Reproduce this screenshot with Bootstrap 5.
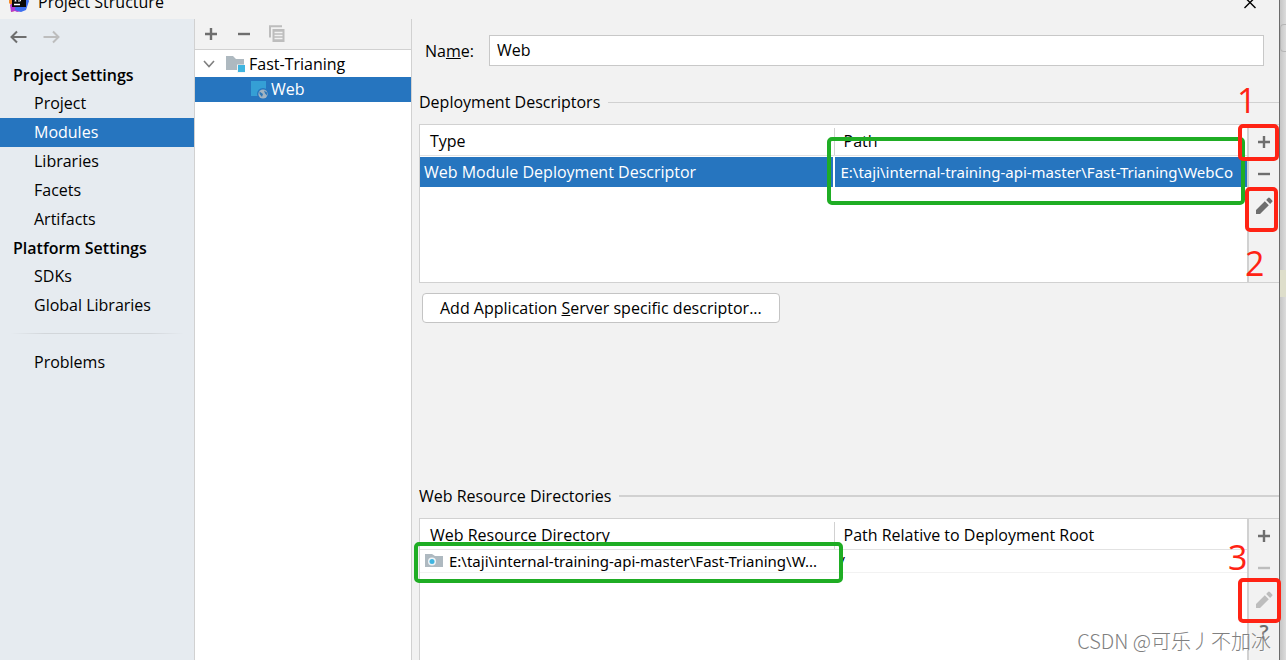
<!DOCTYPE html>
<html lang="en">
<head>
<meta charset="utf-8">
<meta name="viewport" content="width=device-width, initial-scale=1">
<title>Project Structure</title>
<link href="https://cdn.jsdelivr.net/npm/bootstrap@5.3.0/dist/css/bootstrap.min.css" rel="stylesheet">
<style>
  :root { --sel: #2675bf; --line: #d1d1d1; --ink: #6e6e6e; }
  body { font: 16px/20px "Open Sans", "Noto Sans CJK SC", sans-serif; color: #000; background: #f2f2f2; overflow: hidden; }
  svg { display: block; flex: none; }
  .title-strip { height: 19px; }
  .title-strip > * { margin-top: -16px; }
  .title-strip svg.logo { margin-left: 9px; }
  .title-text { padding: 8px 0 0 9px; }
  .close-btn { margin-right: 22px; }
  .app-window { min-width: 0; border-right: 1px solid #6b6b6b; }
  .backdrop { width: 6px; background: linear-gradient(90deg, #c6c6c6, #dcdcdc); padding-top: 20px; }
  .backdrop i { display: block; border: 1px solid #b5b5b5; border-right: 0; height: 28px; border-radius: 4px 0 0 4px; margin-top: 4px; }
  .backdrop b { display: block; height: 27px; background: #dedecb; margin-top: 218px; }
  .settings-nav { width: 195px; background: #e6ebf0; border-right: 1px solid var(--line); }
  .history { height: 36px; padding: 0 10px; gap: 16px; }
  .nav-groups { padding-top: 6px; }
  .group-head { font-size: 16px; font-weight: 600; line-height: 28px; padding-left: 13px; margin: 0; }
  .settings-nav .nav-link { color: #000; line-height: 29px; padding: 0 0 0 34px; border-radius: 0; }
  .settings-nav .nav-link.active { background: var(--sel); color: #fff; }
  .fade-rule { height: 1px; margin: 13px 10px 14px; background: linear-gradient(90deg, transparent, #d2d6da 20%, #d2d6da 80%, transparent); }
  .module-list { width: 217px; background: #fff; border-right: 1px solid var(--line); }
  .module-tools { height: 31px; background: #f2f2f2; border-bottom: 1px solid var(--line); padding: 0 8px; gap: 17px; }
  .plain-btn { border: 0; padding: 0; background: none; color: var(--ink); display: flex; align-items: center; justify-content: center; }
  .plain-btn:disabled { color: #bdbdbd; }
  .tree-row { border: 0; background: none; width: 100%; color: #000; height: 27px; padding: 0 0 0 7px; }
  .tree-row.child-row { height: 25px; background: var(--sel); color: #fff; padding: 0 0 2px 55px; }
  .editor { min-width: 0; padding: 16px 0 0 7px; }
  .name-row { padding: 0 15px 0 6px; }
  .name-row label { width: 64px; flex: none; }
  .name-row .form-control { height: 31px; font-size: 16px; line-height: 20px; color: #000; border: 1px solid #c8c8c8; border-radius: 0; padding: 0 7px 2px; box-shadow: none; }
  .section-head { font-size: 16px; font-weight: 400; line-height: 20px; margin: 26px 0 12px; gap: 8px; }
  .section-head::after { content: ""; flex: 1; height: 1px; background: var(--line); }
  .section-head.second-head { margin-top: 163px; }
  .section-head.second-head::after { height: 2px; }
  .grid-panel { background: #fff; border: 1px solid var(--line); border-right: 0; }
  .first-panel { height: 159px; }
  .grid-area { min-width: 0; }
  .data-grid { table-layout: fixed; width: 100%; border-collapse: separate; border-spacing: 0; }
  .data-grid th { font-weight: 400; height: 31px; padding: 2px 10px 0; border-bottom: 1px solid #e2e2e2; }
  .data-grid th + th { background: linear-gradient(var(--line), var(--line)) 0 3px / 1px 27px no-repeat; }
  .data-grid td { padding: 0 4px; overflow: hidden; white-space: nowrap; }
  .descriptors tbody { line-height: 30px; color: #fff; }
  .descriptors td { background: var(--sel); background-clip: padding-box; border-top: 1px solid #fff; }
  .descriptors td + td { font: 15px/30px "Noto Sans", sans-serif; border-left: 1px solid #fff; padding: 0 0 0 6px; }
  .descriptors td:first-child { border-right: 1px solid #fff; }
  .resources td { font: 15px/22px "Noto Sans", sans-serif; height: 22px; padding-left: 5px; border-bottom: 1px solid #f2f2f2; }
  .resources td + td { padding-left: 6px; }
  .side-tools { width: 32px; background: #f2f2f2; border-left: 2px solid var(--line); padding-top: 1px; }
  .side-tools .plain-btn { height: 32px; width: 100%; }
  .side-tools .help-mark { font-size: 20px; font-weight: 600; }
  .add-btn { margin: 10px 0 0 3px; border: 1px solid #c4c4c4; border-radius: 4px; background: #fff; color: #000; line-height: 20px; padding: 4px 17px; }
  .callout { position: absolute; border: 4px solid #ff2314; border-radius: 5px; pointer-events: none; z-index: 2; }
  .callout.green { border-color: #1fad24; z-index: 1; }
  .c-path { left: calc(50% - 7px); right: 2px; top: 12px; height: 68px; }
  .c-dir { left: -6px; right: calc(50% - 9px); top: 23px; height: 41px; }
  .c-add { left: -11px; right: 0; top: -1px; height: 37px; }
  .c-edit { left: -4px; right: 1px; top: 62px; height: 45px; }
  .c-edit2 { left: -11px; right: -2px; top: 59px; height: 45px; }
  .step { position: absolute; color: #ff2314; font-size: 34px; line-height: 34px; z-index: 2; }
  .s1 { left: -12px; top: -42px; }
  .s2 { left: -4px; top: 121px; }
  .s3 { left: -21px; top: 21px; }
  .watermark { position: absolute; right: 15px; bottom: 5px; font: 300 20px/28px "Noto Sans CJK SC", sans-serif; color: #808080; text-shadow: 1px 1px 0 #ffffffb0; z-index: 3; white-space: nowrap; }
</style>
</head>
<body>
<svg width="0" height="0" class="position-absolute" aria-hidden="true">
  <symbol id="plus" viewBox="0 0 16 16"><path d="M8 2v12M2 8h12" stroke="currentColor" stroke-width="2.4"/></symbol>
  <symbol id="minus" viewBox="0 0 16 16"><path d="M2 8h12" stroke="currentColor" stroke-width="2.4"/></symbol>
  <symbol id="pencil" viewBox="0 0 18 18"><path d="M1 13 9.800 4.200l4 4L5 17H1zM11.200 2.900 13 1.100a1.300 1.300 0 0 1 1.900 0L17 3.200a1.300 1.300 0 0 1 0 1.900L15.100 6.900z" fill="currentColor"/></symbol>
</svg>
<div class="d-flex min-vh-100 position-relative">
  <div class="app-window flex-fill d-flex flex-column">
    <header class="title-strip d-flex">
      <svg class="logo" width="20" height="28" viewBox="0 0 20 28"><path d="M0 10h8l1 16-7 2V21L0 19z" fill="#f68c2a"/><path d="M1 21 8 16l5 11-5 1-2-1-4 1z" fill="#b63bd0"/><path d="M8 10h9l3 7-3 9-5 2-6-2z" fill="#3c6ff0"/><path d="M3 10h14v13H3z" fill="#090909"/><path d="M5 20.500h6" stroke="#fff" stroke-width="1.500"/><path d="M5.500 17h2M6.500 12v5M9 17h2.500V12" stroke="#fff" fill="none"/></svg>
      <span class="title-text">Project Structure</span>
      <button class="plain-btn close-btn ms-auto text-black align-self-start" aria-label="Close"><svg width="14" height="40" viewBox="0 0 14 40"><path d="m1.500 13 11 11m0-11-11 11" stroke="currentColor" stroke-width="1.400"/></svg></button>
    </header>
    <div class="d-flex flex-fill">
      <aside class="settings-nav flex-shrink-0">
        <div class="history d-flex">
          <button class="plain-btn" aria-label="Back"><svg width="17" height="16" viewBox="0 0 17 16"><path d="M16.500 8H2M7 2.500 1.500 8 7 13.500" fill="none" stroke="currentColor" stroke-width="2"/></svg></button>
          <button class="plain-btn" disabled aria-label="Forward"><svg width="17" height="16" viewBox="0 0 17 16"><path d="M.5 8H15M10 2.500 15.500 8 10 13.500" fill="none" stroke="currentColor" stroke-width="2"/></svg></button>
        </div>
        <nav class="nav nav-groups flex-column flex-nowrap">
          <h2 class="group-head">Project Settings</h2>
          <a class="nav-link" href="#">Project</a>
          <a class="nav-link active" aria-current="page" href="#">Modules</a>
          <a class="nav-link" href="#">Libraries</a>
          <a class="nav-link" href="#">Facets</a>
          <a class="nav-link" href="#">Artifacts</a>
          <h2 class="group-head">Platform Settings</h2>
          <a class="nav-link" href="#">SDKs</a>
          <a class="nav-link" href="#">Global Libraries</a>
          <div class="fade-rule"></div>
          <a class="nav-link" href="#">Problems</a>
        </nav>
      </aside>
      <section class="module-list flex-shrink-0">
        <div class="module-tools d-flex">
          <button class="plain-btn" aria-label="Add module"><svg width="16" height="16"><use href="#plus"/></svg></button>
          <button class="plain-btn" aria-label="Remove module"><svg width="16" height="16"><use href="#minus"/></svg></button>
          <button class="plain-btn" disabled aria-label="Copy module"><svg width="16" height="18" viewBox="1 0 16 18"><path d="M2 12.500V1.200h12" fill="none" stroke="currentColor" stroke-width="2"/><path d="M4.500 4h12v13h-12z" fill="currentColor"/><path d="M6.500 7.500h8M6.500 10.500h8M6.500 13.500h8" stroke="#f2f2f2" stroke-width="1.300"/></svg></button>
        </div>
        <button class="tree-row d-flex align-items-center">
          <svg width="14" height="12" viewBox="0 0 14 12"><path d="m2 3 5 5.500L12 3" fill="none" stroke="#7f7f7f" stroke-width="1.600"/></svg>
          <svg class="ms-2" width="25" height="18" viewBox="0 0 25 18"><path d="M2 1h7l3 3h8v11H2z" fill="#aeb9c0"/><path d="M13 9.500h8V18h-8z" fill="#f2f5f6"/><path d="M14 10h7v7h-7z" fill="#3fb5e0"/></svg>
          Fast-Trianing
        </button>
        <button class="tree-row child-row d-flex align-items-center">
          <svg width="21" height="20" viewBox="0 0 21 20"><path d="M1 2h15v15H1z" fill="#359fd5"/><circle cx="13" cy="15" r="6" fill="#2675bf"/><circle cx="13" cy="15" r="4.600" fill="#a3b4c2"/><path d="M9.500 12.500 13 15l-1 3-2.500-3zM14 11.500l3 2v3l-2-2z" fill="#2f78b8"/></svg>
          Web
        </button>
      </section>
      <main class="editor flex-fill d-flex flex-column">
        <div class="name-row d-flex align-items-center">
          <label for="moduleName">Na<u>m</u>e:</label>
          <input id="moduleName" class="form-control" value="Web">
        </div>
        <h3 class="section-head d-flex align-items-center">Deployment Descriptors</h3>
        <div class="grid-panel first-panel d-flex">
          <div class="grid-area flex-fill position-relative">
            <table class="data-grid descriptors">
              <thead><tr><th>Type</th><th>Path</th></tr></thead>
              <tbody><tr><td>Web Module Deployment Descriptor</td><td>E:\taji\internal-training-api-master\Fast-Trianing\WebCo</td></tr></tbody>
            </table>
            <div class="callout green c-path"></div>
          </div>
          <div class="side-tools position-relative flex-shrink-0">
            <button class="plain-btn" aria-label="Add descriptor"><svg width="16" height="16"><use href="#plus"/></svg></button>
            <button class="plain-btn" aria-label="Remove descriptor"><svg width="16" height="16"><use href="#minus"/></svg></button>
            <button class="plain-btn" aria-label="Edit descriptor"><svg width="18" height="18"><use href="#pencil"/></svg></button>
            <div class="callout c-add"></div>
            <div class="callout c-edit"></div>
            <span class="step s1">1</span>
            <span class="step s2">2</span>
          </div>
        </div>
        <button class="add-btn align-self-start">Add Application <u>S</u>erver specific descriptor...</button>
        <h3 class="section-head second-head d-flex align-items-center">Web Resource Directories</h3>
        <div class="grid-panel border-bottom-0 flex-fill d-flex">
          <div class="grid-area flex-fill position-relative">
            <table class="data-grid resources">
              <thead><tr><th>Web Resource Directory</th><th>Path Relative to Deployment Root</th></tr></thead>
              <tbody><tr><td><div class="d-flex align-items-center"><svg width="24" height="16" viewBox="0 0 24 16"><path d="M0 1h7l3 2h8v11H0z" fill="#aeb9c0"/><circle cx="7" cy="8.500" r="4" fill="#eef4f7"/><circle cx="7" cy="8.500" r="2.500" fill="#3fb5e0"/></svg><span class="text-truncate">E:\taji\internal-training-api-master\Fast-Trianing\W...</span></div></td><td>/</td></tr></tbody>
            </table>
            <div class="callout green c-dir"></div>
          </div>
          <div class="side-tools position-relative flex-shrink-0">
            <button class="plain-btn" aria-label="Add directory"><svg width="16" height="16"><use href="#plus"/></svg></button>
            <button class="plain-btn" disabled aria-label="Remove directory"><svg width="16" height="16"><use href="#minus"/></svg></button>
            <button class="plain-btn" disabled aria-label="Edit directory"><svg width="18" height="18"><use href="#pencil"/></svg></button>
            <button class="plain-btn help-mark" aria-label="Help">?</button>
            <div class="callout c-edit2"></div>
            <span class="step s3">3</span>
          </div>
        </div>
      </main>
    </div>
  </div>
  <div class="backdrop flex-shrink-0" aria-hidden="true"><i></i><b></b></div>
  <div class="watermark">CSDN @可乐丿不加冰</div>
</div>
<script src="https://cdn.jsdelivr.net/npm/bootstrap@5.3.0/dist/js/bootstrap.bundle.min.js"></script>
</body>
</html>
